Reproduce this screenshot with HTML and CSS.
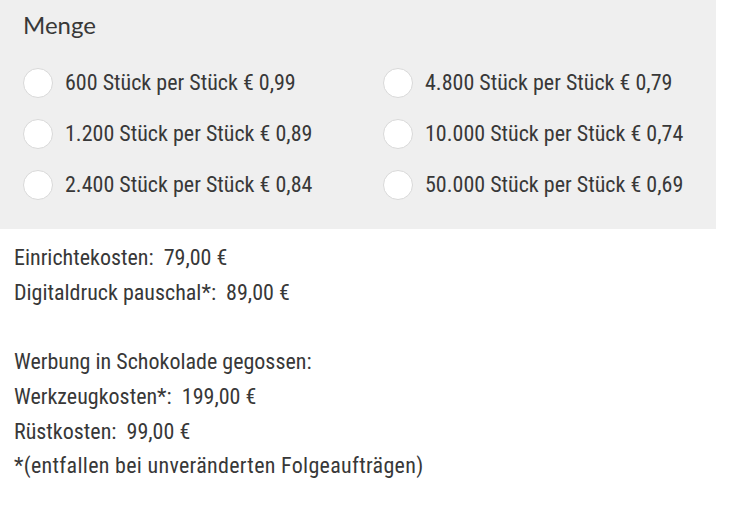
FILE: index.html
```html
<!DOCTYPE html>
<html lang="de">
<head>
<meta charset="utf-8">
<link rel="stylesheet" href="styles.css">
</head>
<body>
<section class="quantity">
  <h3 class="quantity-title">Menge</h3>
  <div class="options">
    <label class="option"><span class="radio"></span><span class="option-text">600 Stück per Stück € 0,99</span></label>
    <label class="option"><span class="radio"></span><span class="option-text">4.800 Stück per Stück € 0,79</span></label>
    <label class="option"><span class="radio"></span><span class="option-text">1.200 Stück per Stück € 0,89</span></label>
    <label class="option"><span class="radio"></span><span class="option-text">10.000 Stück per Stück € 0,74</span></label>
    <label class="option"><span class="radio"></span><span class="option-text">2.400 Stück per Stück € 0,84</span></label>
    <label class="option"><span class="radio"></span><span class="option-text">50.000 Stück per Stück € 0,69</span></label>
  </div>
</section>
<div class="costs">
  <div class="line">Einrichtekosten:&nbsp; 79,00 €</div>
  <div class="line">Digitaldruck pauschal*:&nbsp; 89,00 €</div>
  <div class="line empty"></div>
  <div class="line">Werbung in Schokolade gegossen:</div>
  <div class="line">Werkzeugkosten*:&nbsp; 199,00 €</div>
  <div class="line">Rüstkosten:&nbsp; 99,00 €</div>
  <div class="line note">*(entfallen bei unveränderten Folgeaufträgen)</div>
</div>
</body>
</html>
```
FILE: styles.css
```css
html, body {
  margin: 0;
  padding: 0;
  background: #ffffff;
}
body {
  font-family: "Roboto Condensed", "Liberation Sans", sans-serif;
  color: #383838;
}
.quantity {
  width: 716px;
  box-sizing: border-box;
  background: #efefef;
  padding: 13px 0 19px 23px;
}
.quantity-title {
  margin: 0;
  font-family: "Lato", "Noto Sans", sans-serif;
  font-weight: 400;
  font-size: 24px;
  line-height: 24px;
  height: 44px;
  color: #383838;
}
.options {
  display: grid;
  grid-template-columns: 360px 333px;
  grid-auto-rows: 51px;
}
.option {
  display: flex;
  align-items: center;
  gap: 12px;
}
.radio {
  width: 30px;
  height: 30px;
  box-sizing: border-box;
  border-radius: 50%;
  background: #ffffff;
  border: 1px solid #d9d9d9;
  flex: none;
}
.option-text {
  font-size: 22px;
  line-height: 24px;
}
.costs {
  padding: 12px 0 0 14px;
  font-size: 22px;
  line-height: 34.7px;
}
.line.empty {
  height: 34.7px;
}
.line.note {
  letter-spacing: 0.3px;
}
```
